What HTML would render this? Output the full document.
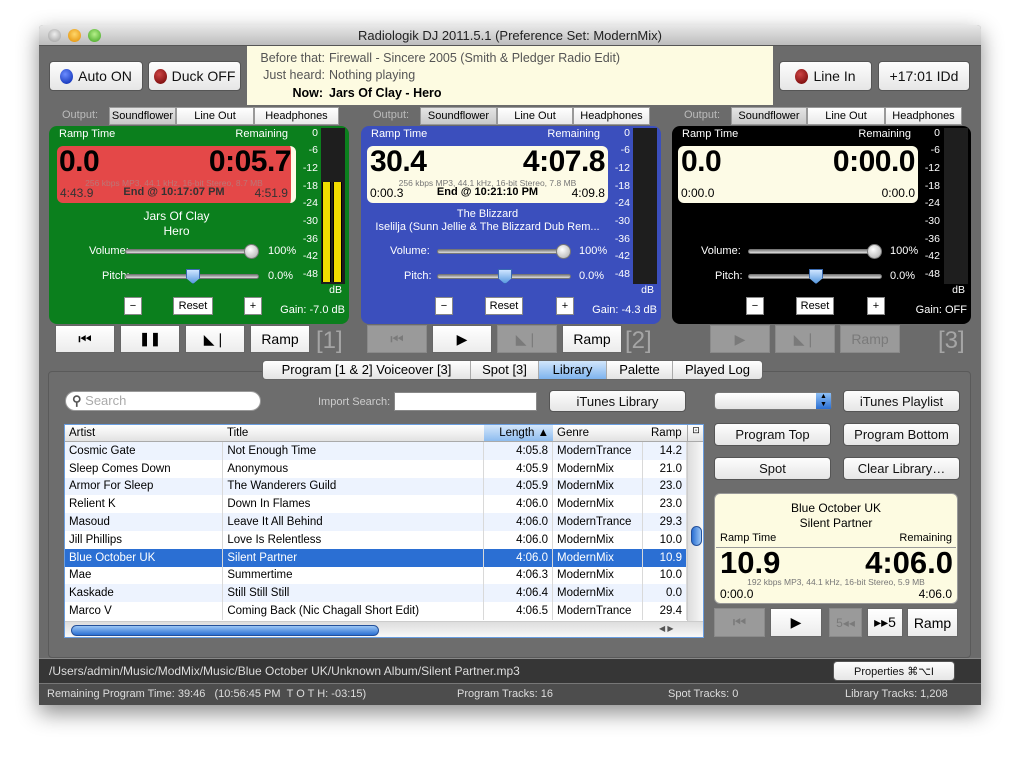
<!DOCTYPE html>
<html><head><meta charset="utf-8"><style>
*{box-sizing:border-box;margin:0;padding:0}
body{width:1020px;height:759px;background:#fff;font-family:"Liberation Sans",sans-serif;position:relative;overflow:hidden}
.a{position:absolute}
.win{left:39px;top:25px;width:942px;height:680px;background:#6b6b6b;box-shadow:0 8px 22px rgba(0,0,0,.45);border-radius:4px 4px 0 0}
.btn{position:absolute;background:linear-gradient(#fdfdfd,#e6e6e6);border:1px solid #555;border-radius:4px;font-size:13px;color:#111;text-align:center;display:flex;align-items:center;justify-content:center}
.tb{position:absolute;background:linear-gradient(#fff,#ececec);border:1px solid #666;font-size:18px;display:flex;align-items:center;justify-content:center;color:#000;height:28px;width:60px;top:325px}
.tb.dis{background:#9a9a9a;color:#7a7a7a;border-color:#8a8a8a}
.ot{position:absolute;top:107px;height:18px;background:linear-gradient(#fff,#e9e9e9);border:1px solid #999;font-size:11px;display:flex;align-items:center;justify-content:center}
.ot.sel{background:linear-gradient(#e4e4e4,#c9c9c9)}
.deck{position:absolute;top:126px;width:300px;height:198px;border-radius:8px;color:#fff;font-size:11px}
.deck .l{position:absolute}
.disp{position:absolute;left:8px;top:20px;width:239px;height:57px;border-radius:6px;background:#fdfbe6;color:#000}
.big{position:absolute;top:-1px;font-size:30px;font-weight:bold;letter-spacing:-.5px}
.spec{position:absolute;top:32px;left:0;width:100%;text-align:center;font-size:8.5px;color:#777}
.row3{position:absolute;top:40px;left:3px;right:3px;font-size:12px;display:flex;justify-content:space-between}
.trk{position:absolute;height:5px;border-radius:3px;background:linear-gradient(#888,#ddd);border:1px solid #777}
.knob{position:absolute;width:15px;height:15px;border-radius:50%;background:radial-gradient(circle at 40% 35%,#fff,#aaa);border:1px solid #777}
.pk{position:absolute;width:14px;height:15px;background:linear-gradient(#cfe5ff,#5b9be0);border:1px solid #3a6ab0;clip-path:polygon(0 0,100% 0,100% 60%,50% 100%,0 60%)}
.sb{position:absolute;background:#fff;border:1px solid #888;color:#000;font-size:11px;display:flex;align-items:center;justify-content:center;height:18px;top:171px}
.ml{position:absolute;width:20px;text-align:right;font-size:10.5px;color:#fff}
.meter{position:absolute;left:272px;top:2px;width:24px;height:156px;background:#1e1e1e}
.y{position:absolute;top:54px;width:9px;height:100px;background:#f0dc00;border-left:1px solid #000;border-right:1px solid #000}
.num{position:absolute;top:327px;font-size:24px;color:#a5a5a5}
table{border-collapse:collapse;font-size:11.5px;width:622px}
td{height:17.8px;padding:0 4px;border-right:1px solid #d9d9d9;white-space:nowrap;color:#000}
tr:nth-child(odd) td{background:#edf3fe}
tr.s td{background:#2b6fd3;color:#fff}
td.r{text-align:right}
</style></head><body>
<div class="a win"></div>
<div class="a" style="left:39px;top:25px;width:942px;height:21px;background:linear-gradient(#e8e8e8,#bdbdbd);border-bottom:1px solid #555;border-radius:4px 4px 0 0;text-align:center;font-size:13px;line-height:21px;color:#222">Radiologik DJ 2011.5.1 (Preference Set: ModernMix)</div>
<div class="a" style="left:48px;top:29px;width:13px;height:13px;border-radius:50%;background:radial-gradient(circle at 50% 40%,#eee,#999)"></div>
<div class="a" style="left:68px;top:29px;width:13px;height:13px;border-radius:50%;background:radial-gradient(circle at 50% 40%,#ffd76a,#e08a00)"></div>
<div class="a" style="left:88px;top:29px;width:13px;height:13px;border-radius:50%;background:radial-gradient(circle at 50% 40%,#b6f08a,#3aa01c)"></div>

<div class="btn" style="left:49px;top:61px;width:94px;height:30px;font-size:14px"><span style="display:inline-block;width:13px;height:15px;border-radius:50%;background:radial-gradient(circle at 40% 35%,#6b8cff,#0022aa);margin-right:5px"></span>Auto ON</div>
<div class="btn" style="left:148px;top:61px;width:93px;height:30px;font-size:14px"><span style="display:inline-block;width:13px;height:15px;border-radius:50%;background:radial-gradient(circle at 40% 35%,#c44,#6a0000);margin-right:5px"></span>Duck OFF</div>
<div class="btn" style="left:779px;top:61px;width:93px;height:30px;font-size:14px"><span style="display:inline-block;width:13px;height:15px;border-radius:50%;background:radial-gradient(circle at 40% 35%,#c44,#6a0000);margin-right:5px"></span>Line In</div>
<div class="btn" style="left:878px;top:61px;width:92px;height:30px;font-size:14px">+17:01 IDd</div>

<div class="a" style="left:247px;top:46px;width:526px;height:59px;background:#fdfbe1;font-size:12.5px;color:#555">
<div class="a" style="left:0;top:5px;width:78px;text-align:right">Before that:</div><div class="a" style="left:82px;top:5px">Firewall - Sincere 2005 (Smith &amp; Pledger Radio Edit)</div>
<div class="a" style="left:0;top:22px;width:78px;text-align:right">Just heard:</div><div class="a" style="left:82px;top:22px">Nothing playing</div>
<div class="a" style="left:0;top:40px;width:76px;text-align:right;color:#000;font-weight:bold">Now:</div><div class="a" style="left:82px;top:40px;color:#000;font-weight:bold">Jars Of Clay - Hero</div>
</div>

<div class="a" style="left:62px;top:109px;font-size:11px;color:#bbb">Output:</div>
<div class="ot sel" style="left:109px;width:67px">Soundflower</div><div class="ot" style="left:176px;width:78px">Line Out</div><div class="ot" style="left:254px;width:85px">Headphones</div>
<div class="a" style="left:373px;top:109px;font-size:11px;color:#bbb">Output:</div>
<div class="ot sel" style="left:420px;width:77px">Soundflower</div><div class="ot" style="left:497px;width:76px">Line Out</div><div class="ot" style="left:573px;width:77px">Headphones</div>
<div class="a" style="left:684px;top:109px;font-size:11px;color:#bbb">Output:</div>
<div class="ot sel" style="left:731px;width:76px">Soundflower</div><div class="ot" style="left:807px;width:78px">Line Out</div><div class="ot" style="left:885px;width:77px">Headphones</div>

<div class="deck" style="left:49px;background:#0b7f1d">
<div class="l" style="left:10px;top:2px">Ramp Time</div><div class="l" style="left:180px;width:59px;text-align:right;top:2px">Remaining</div>
<div class="disp" style="background:#e44848;border-right:5px solid #fdfbe6"><div class="big" style="left:2px">0.0</div><div class="big" style="right:0">0:05.7</div><div class="spec" style="color:#b77">256 kbps MP3, 44.1 kHz, 16-bit Stereo, 8.7 MB</div><div class="row3" style="color:#333"><span>4:43.9</span><b style="font-size:11px">End @ 10:17:07 PM</b><span>4:51.9</span></div></div>
<div class="l" style="left:8px;width:239px;text-align:center;top:83px;font-size:12px;line-height:15px">Jars Of Clay<br>Hero</div>
<div class="l" style="left:40px;top:119px">Volume:</div><div class="trk" style="left:76px;top:123px;width:134px"></div><div class="knob" style="left:195px;top:118px"></div><div class="l" style="left:219px;top:119px">100%</div>
<div class="l" style="left:53px;top:144px">Pitch:</div><div class="trk" style="left:76px;top:148px;width:134px"></div><div class="pk" style="left:137px;top:143px"></div><div class="l" style="left:219px;top:144px">0.0%</div>
<div class="sb" style="left:75px;width:18px">−</div><div class="sb" style="left:124px;width:40px">Reset</div><div class="sb" style="left:195px;width:18px">+</div>
<div class="l" style="right:4px;top:178px;font-size:11px">Gain: -7.0 dB</div>
<div class="meter"><div class="y" style="left:1px"></div><div class="y" style="left:12px"></div></div>
</div>
<div class="deck" style="left:361px;background:#3b4fbd">
<div class="l" style="left:10px;top:2px">Ramp Time</div><div class="l" style="left:180px;width:59px;text-align:right;top:2px">Remaining</div>
<div class="disp" style="left:6px;width:241px"><div class="big" style="left:3px">30.4</div><div class="big" style="right:3px">4:07.8</div><div class="spec">256 kbps MP3, 44.1 kHz, 16-bit Stereo, 7.8 MB</div><div class="row3"><span>0:00.3</span><b style="font-size:11px">End @ 10:21:10 PM</b><span>4:09.8</span></div></div>
<div class="l" style="left:6px;width:241px;text-align:center;top:82px;font-size:11px;line-height:13px">The Blizzard<br>Iselilja (Sunn Jellie &amp; The Blizzard Dub Rem...</div>
<div class="l" style="left:29px;top:119px">Volume:</div><div class="trk" style="left:76px;top:123px;width:134px"></div><div class="knob" style="left:195px;top:118px"></div><div class="l" style="left:218px;top:119px">100%</div>
<div class="l" style="left:43px;top:144px">Pitch:</div><div class="trk" style="left:76px;top:148px;width:134px"></div><div class="pk" style="left:137px;top:143px"></div><div class="l" style="left:218px;top:144px">0.0%</div>
<div class="sb" style="left:74px;width:18px">−</div><div class="sb" style="left:124px;width:38px">Reset</div><div class="sb" style="left:195px;width:18px">+</div>
<div class="l" style="right:4px;top:178px">Gain: -4.3 dB</div>
<div class="meter"></div>
</div>
<div class="deck" style="left:672px;background:#000;width:299px">
<div class="l" style="left:10px;top:2px">Ramp Time</div><div class="l" style="left:180px;width:59px;text-align:right;top:2px">Remaining</div>
<div class="disp" style="left:6px;width:240px"><div class="big" style="left:3px">0.0</div><div class="big" style="right:3px">0:00.0</div><div class="row3"><span>0:00.0</span><span>0:00.0</span></div></div>
<div class="l" style="left:29px;top:119px">Volume:</div><div class="trk" style="left:76px;top:123px;width:134px"></div><div class="knob" style="left:195px;top:118px"></div><div class="l" style="left:218px;top:119px">100%</div>
<div class="l" style="left:43px;top:144px">Pitch:</div><div class="trk" style="left:76px;top:148px;width:134px"></div><div class="pk" style="left:137px;top:143px"></div><div class="l" style="left:218px;top:144px">0.0%</div>
<div class="sb" style="left:74px;width:18px">−</div><div class="sb" style="left:124px;width:38px">Reset</div><div class="sb" style="left:195px;width:18px">+</div>
<div class="l" style="right:4px;top:178px">Gain: OFF</div>
<div class="meter"></div>
</div>
<div class="a" style="left:0;top:0">
<div class="ml" style="left:298px;top:127px">0</div><div class="ml" style="left:298px;top:144px">-6</div><div class="ml" style="left:298px;top:162px">-12</div><div class="ml" style="left:298px;top:180px">-18</div><div class="ml" style="left:298px;top:197px">-24</div><div class="ml" style="left:298px;top:215px">-30</div><div class="ml" style="left:298px;top:233px">-36</div><div class="ml" style="left:298px;top:250px">-42</div><div class="ml" style="left:298px;top:268px">-48</div><div class="ml" style="left:322px;top:284px">dB</div>
<div class="ml" style="left:610px;top:127px">0</div><div class="ml" style="left:610px;top:144px">-6</div><div class="ml" style="left:610px;top:162px">-12</div><div class="ml" style="left:610px;top:180px">-18</div><div class="ml" style="left:610px;top:197px">-24</div><div class="ml" style="left:610px;top:215px">-30</div><div class="ml" style="left:610px;top:233px">-36</div><div class="ml" style="left:610px;top:250px">-42</div><div class="ml" style="left:610px;top:268px">-48</div><div class="ml" style="left:634px;top:284px">dB</div>
<div class="ml" style="left:920px;top:127px">0</div><div class="ml" style="left:920px;top:144px">-6</div><div class="ml" style="left:920px;top:162px">-12</div><div class="ml" style="left:920px;top:180px">-18</div><div class="ml" style="left:920px;top:197px">-24</div><div class="ml" style="left:920px;top:215px">-30</div><div class="ml" style="left:920px;top:233px">-36</div><div class="ml" style="left:920px;top:250px">-42</div><div class="ml" style="left:920px;top:268px">-48</div><div class="ml" style="left:945px;top:284px">dB</div>
</div>

<div class="tb" style="left:55px;font-size:15px">⏮</div><div class="tb" style="left:120px;font-size:13px;font-weight:bold">❚❚</div><div class="tb" style="left:185px;font-size:14px">◣❘</div><div class="tb" style="left:250px;font-size:14px">Ramp</div><div class="num" style="left:316px">[1]</div>
<div class="tb dis" style="left:367px;font-size:15px">⏮</div><div class="tb" style="left:432px;font-size:14px">▶</div><div class="tb dis" style="left:497px;font-size:14px">◣❘</div><div class="tb" style="left:562px;font-size:14px">Ramp</div><div class="num" style="left:625px">[2]</div>
<div class="tb dis" style="left:710px;font-size:14px">▶</div><div class="tb dis" style="left:775px;font-size:14px">◣❘</div><div class="tb dis" style="left:840px;font-size:14px">Ramp</div><div class="num" style="left:938px">[3]</div>

<div class="a" style="left:48px;top:371px;width:923px;height:287px;border:1px solid #5a5a5a;border-radius:4px;background:#6d6d6d"></div>
<div class="a" style="left:262px;top:360px;height:20px;display:flex;font-size:13px;border:1px solid #666;border-radius:4px;overflow:hidden">
<div style="width:208px;background:linear-gradient(#fff,#e4e4e4);text-align:center;line-height:18px;border-right:1px solid #aaa">Program [1 &amp; 2] Voiceover [3]</div>
<div style="width:68px;background:linear-gradient(#fff,#e4e4e4);text-align:center;line-height:18px;border-right:1px solid #aaa">Spot [3]</div>
<div style="width:68px;background:linear-gradient(#d2e6fb,#7eb3ee);text-align:center;line-height:18px;border-right:1px solid #aaa">Library</div>
<div style="width:66px;background:linear-gradient(#fff,#e4e4e4);text-align:center;line-height:18px;border-right:1px solid #aaa">Palette</div>
<div style="width:89px;background:linear-gradient(#fff,#e4e4e4);text-align:center;line-height:18px">Played Log</div>
</div>
<div class="a" style="left:65px;top:391px;width:196px;height:20px;background:#fff;border-radius:10px;border:1px solid #999;font-size:13px;color:#aaa;line-height:18px;padding-left:6px"><b style="color:#555">&#9906;</b> Search</div>
<div class="a" style="left:318px;top:396px;font-size:11px;color:#ccc">Import Search:</div>
<div class="a" style="left:394px;top:392px;width:143px;height:19px;background:#fff;border:1px solid #888"></div>
<div class="btn" style="left:549px;top:390px;width:137px;height:22px">iTunes Library</div>

<div class="a" style="left:64px;top:424px;width:640px;height:214px;background:#fff;border:1px solid #6a9ee0;overflow:hidden">
<div style="height:17px;background:linear-gradient(#fff,#e2e2e2);border-bottom:1px solid #aaa;font-size:11.5px;position:relative">
<span class="a" style="left:4px;top:2px">Artist</span><span class="a" style="left:162px;top:2px">Title</span>
<span class="a" style="left:419px;top:0;width:69px;height:16px;background:linear-gradient(#d5e7fb,#8ebcef);text-align:right;padding:2px 4px">Length ▲</span>
<span class="a" style="left:492px;top:2px">Genre</span><span class="a" style="left:586px;top:2px">Ramp</span>
<span class="a" style="left:622px;top:0;width:17px;height:17px;border-left:1px solid #aaa;font-size:9px;text-align:center">⊡</span>
</div>
<table>
<colgroup><col style="width:158px"><col style="width:261px"><col style="width:69px"><col style="width:90px"><col style="width:44px"></colgroup>
<tr><td>Cosmic Gate</td><td>Not Enough Time</td><td class="r">4:05.8</td><td>ModernTrance</td><td class="r">14.2</td></tr>
<tr><td>Sleep Comes Down</td><td>Anonymous</td><td class="r">4:05.9</td><td>ModernMix</td><td class="r">21.0</td></tr>
<tr><td>Armor For Sleep</td><td>The Wanderers Guild</td><td class="r">4:05.9</td><td>ModernMix</td><td class="r">23.0</td></tr>
<tr><td>Relient K</td><td>Down In Flames</td><td class="r">4:06.0</td><td>ModernMix</td><td class="r">23.0</td></tr>
<tr><td>Masoud</td><td>Leave It All Behind</td><td class="r">4:06.0</td><td>ModernTrance</td><td class="r">29.3</td></tr>
<tr><td>Jill Phillips</td><td>Love Is Relentless</td><td class="r">4:06.0</td><td>ModernMix</td><td class="r">10.0</td></tr>
<tr class="s"><td>Blue October UK</td><td>Silent Partner</td><td class="r">4:06.0</td><td>ModernMix</td><td class="r">10.9</td></tr>
<tr><td>Mae</td><td>Summertime</td><td class="r">4:06.3</td><td>ModernMix</td><td class="r">10.0</td></tr>
<tr><td>Kaskade</td><td>Still Still Still</td><td class="r">4:06.4</td><td>ModernMix</td><td class="r">0.0</td></tr>
<tr><td>Marco V</td><td>Coming Back (Nic Chagall Short Edit)</td><td class="r">4:06.5</td><td>ModernTrance</td><td class="r">29.4</td></tr>
</table>
<div class="a" style="left:622px;top:17px;width:17px;height:179px;background:linear-gradient(90deg,#ddd,#fafafa);border-left:1px solid #ccc"><div class="a" style="left:3px;top:84px;width:11px;height:20px;border-radius:6px;background:linear-gradient(90deg,#2a6fd3,#9cc7f5);border:1px solid #24509a"></div></div>
<div class="a" style="left:0;top:196px;width:640px;height:17px;background:linear-gradient(#ddd,#fafafa);border-top:1px solid #ccc"><div class="a" style="left:6px;top:3px;width:308px;height:11px;border-radius:6px;background:linear-gradient(#9cc7f5,#2a6fd3);border:1px solid #24509a"></div><span class="a" style="left:594px;top:2px;font-size:8px;color:#555">◀ ▶</span></div>
</div>

<div class="a" style="left:714px;top:392px;width:118px;height:18px;background:linear-gradient(#fff,#e4e4e4);border:1px solid #777;border-radius:4px"><div class="a" style="right:0;top:0;width:15px;height:16px;background:linear-gradient(#8ec0f5,#2b6fd3);font-size:7px;color:#000;text-align:center;line-height:8px">▲<br>▼</div></div>
<div class="btn" style="left:843px;top:390px;width:117px;height:22px">iTunes Playlist</div>
<div class="btn" style="left:714px;top:423px;width:117px;height:23px">Program Top</div>
<div class="btn" style="left:843px;top:423px;width:117px;height:23px">Program Bottom</div>
<div class="btn" style="left:714px;top:457px;width:117px;height:23px">Spot</div>
<div class="btn" style="left:843px;top:457px;width:117px;height:23px">Clear Library…</div>
<div class="a" style="left:714px;top:493px;width:244px;height:111px;background:#fdfbe1;border-radius:6px;border:1px solid #999;font-size:12px">
<div class="a" style="left:0;top:7px;width:100%;text-align:center;line-height:15px">Blue October UK<br>Silent Partner</div>
<div class="a" style="left:5px;top:38px;font-size:11px">Ramp Time</div><div class="a" style="right:5px;top:38px;font-size:11px">Remaining</div>
<div class="a" style="left:1px;top:53px;width:240px;border-top:1px solid #999"></div>
<div class="a" style="left:5px;top:51px;font-size:31px;font-weight:bold">10.9</div><div class="a" style="right:4px;top:51px;font-size:31px;font-weight:bold">4:06.0</div>
<div class="a" style="left:0;top:83px;width:100%;text-align:center;font-size:8.5px;color:#777">192 kbps MP3, 44.1 kHz, 16-bit Stereo, 5.9 MB</div>
<div class="a" style="left:5px;top:93px">0:00.0</div><div class="a" style="right:5px;top:93px">4:06.0</div>
</div>
<div class="tb dis" style="left:714px;top:608px;width:51px;height:29px;font-size:15px">⏮</div>
<div class="tb" style="left:770px;top:608px;width:52px;height:29px;font-size:14px">▶</div>
<div class="tb dis" style="left:829px;top:608px;width:33px;height:29px;font-size:12px">5◂◂</div>
<div class="tb" style="left:867px;top:608px;width:36px;height:29px;font-size:14px">▸▸5</div>
<div class="tb" style="left:907px;top:608px;width:51px;height:29px;font-size:14px">Ramp</div>

<div class="a" style="left:39px;top:658px;width:942px;height:25px;background:#363636;border-top:1px solid #888;color:#ddd;font-size:12px;line-height:24px;padding-left:10px">/Users/admin/Music/ModMix/Music/Blue October UK/Unknown Album/Silent Partner.mp3</div>
<div class="btn" style="left:833px;top:661px;width:122px;height:20px;font-size:11px">Properties ⌘⌥I</div>
<div class="a" style="left:39px;top:683px;width:942px;height:22px;background:#4d4d4d;border-top:1px solid #777;color:#ddd;font-size:11px;line-height:21px">
<span class="a" style="left:8px">Remaining Program Time: 39:46 &nbsp; (10:56:45 PM &nbsp;T O T H: -03:15)</span>
<span class="a" style="left:418px">Program Tracks: 16</span><span class="a" style="left:629px">Spot Tracks: 0</span><span class="a" style="left:806px">Library Tracks: 1,208</span></div>
</body></html>
